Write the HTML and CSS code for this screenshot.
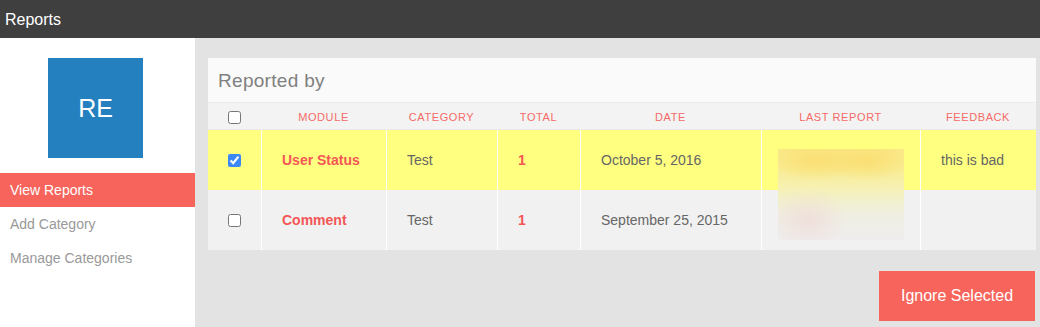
FILE: index.html
```html
<!DOCTYPE html>
<html>
<head>
<meta charset="utf-8">
<link rel="stylesheet" href="styles.css">
</head>
<body>
<header class="topbar">Reports</header>
<div class="layout">
  <aside class="sidebar">
    <div class="avatar">RE</div>
    <nav class="nav">
      <a class="nav-item active">View Reports</a>
      <a class="nav-item">Add Category</a>
      <a class="nav-item">Manage Categories</a>
    </nav>
  </aside>
  <main class="main">
    <section class="panel">
      <h2 class="panel-title">Reported by</h2>
      <div class="grid head">
        <div class="cell cb"><input type="checkbox"></div>
        <div class="cell">MODULE</div>
        <div class="cell">CATEGORY</div>
        <div class="cell">TOTAL</div>
        <div class="cell">DATE</div>
        <div class="cell">LAST REPORT</div>
        <div class="cell">FEEDBACK</div>
      </div>
      <div class="grid row selected">
        <div class="cell cb"><input type="checkbox" checked></div>
        <div class="cell module">User Status</div>
        <div class="cell">Test</div>
        <div class="cell total">1</div>
        <div class="cell">October 5, 2016</div>
        <div class="cell shot-cell"><div class="shot"></div></div>
        <div class="cell">this is bad</div>
      </div>
      <div class="grid row">
        <div class="cell cb"><input type="checkbox"></div>
        <div class="cell module">Comment</div>
        <div class="cell">Test</div>
        <div class="cell total">1</div>
        <div class="cell">September 25, 2015</div>
        <div class="cell"></div>
        <div class="cell"></div>
      </div>
    </section>
    <div class="actions">
      <button class="btn">Ignore Selected</button>
    </div>
  </main>
</div>
</body>
</html>
```

FILE: styles.css
```css
* { box-sizing: border-box; }
html, body { margin: 0; padding: 0; }
body {
  width: 1040px;
  height: 327px;
  overflow: hidden;
  font-family: "Liberation Sans", Arial, sans-serif;
  background: #e3e3e3;
}
.topbar {
  height: 38px;
  background: #3f3f3f;
  color: #fff;
  font-size: 16px;
  line-height: 40px;
  padding-left: 5px;
}
.layout {
  display: flex;
  height: 289px;
}
.sidebar {
  width: 195px;
  flex: none;
  background: #fff;
  padding-top: 20px;
}
.avatar {
  width: 95px;
  height: 100px;
  margin-left: 48px;
  background: #2580c0;
  color: #fff;
  font-size: 25px;
  display: flex;
  align-items: center;
  justify-content: center;
}
.nav {
  margin-top: 15px;
  display: flex;
  flex-direction: column;
}
.nav-item {
  height: 34px;
  line-height: 35px;
  padding-left: 10px;
  font-size: 14px;
  color: #999;
}
.nav-item.active {
  background: #f7645c;
  color: #fff;
}
.main {
  flex: 1;
  padding: 20px 4px 0 13px;
}
.panel {
  width: 828px;
  background: #f2f2f2;
}
.panel-title {
  margin: 0;
  height: 45px;
  background: #fafafa;
  border-bottom: 1px solid #ebebeb;
  font-weight: normal;
  font-size: 19px;
  color: #808080;
  padding-left: 10px;
  line-height: 46px;
  letter-spacing: 0.3px;
}
.grid {
  display: grid;
  grid-template-columns: 53px 125px 111px 83px 181px 159px 116px;
}
.head {
  height: 27px;
  background: #f3f3f3;
  border-bottom: 1px solid #e9e9e9;
}
.head .cell {
  font-size: 11px;
  letter-spacing: 0.6px;
  color: #f56a66;
  text-align: center;
  line-height: 28px;
}
.head .cb { padding-top: 1px; }
.row {
  height: 60px;
  background: #f1f1f1;
}
.row.selected { background: #ffff80; }
.row .cell {
  border-left: 1px solid #fff;
  padding-left: 20px;
  font-size: 14px;
  color: #666;
  line-height: 60px;
}
.row .cell.cb {
  border-left: none;
  padding-left: 0;
}
.cb {
  display: flex;
  align-items: center;
  justify-content: center;
}
.cb input {
  margin: 0;
  width: 13px;
  height: 13px;
  accent-color: #3b88f5;
}
.row .module, .row .total {
  color: #f45656;
  font-weight: bold;
}
.shot-cell { position: relative; }
.shot {
  position: absolute;
  left: 16px;
  top: 19px;
  width: 126px;
  height: 91px;
  z-index: 2;
  background:
    radial-gradient(ellipse 45px 20px at 38px 12px, rgba(250, 218, 105, 0.75), rgba(250, 218, 105, 0) 100%),
    radial-gradient(ellipse 45px 20px at 88px 12px, rgba(250, 218, 105, 0.75), rgba(250, 218, 105, 0) 100%),
    radial-gradient(ellipse 40px 30px at 30px 70px, rgba(240, 210, 210, 0.55), rgba(240, 210, 210, 0) 100%),
    linear-gradient(to bottom, #fbe888 0%, #f9ec92 20%, #f6f0ae 40%, #f2f0cf 58%, #efefe4 74%, #efeded 100%);
}
.actions {
  display: flex;
  justify-content: flex-end;
  padding-top: 21px;
  padding-right: 1px;
}
.btn {
  width: 156px;
  height: 50px;
  border: none;
  background: #f7645c;
  color: #fff;
  font-family: "Liberation Sans", Arial, sans-serif;
  font-size: 16px;
  padding: 0;
}
```
